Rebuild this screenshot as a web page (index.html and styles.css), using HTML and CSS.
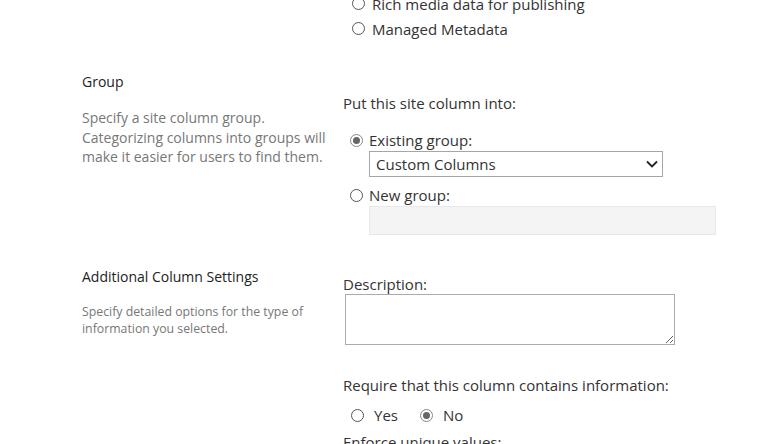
FILE: index.html
```html
<!DOCTYPE html>
<html>
<head>
<meta charset="utf-8">
<link rel="stylesheet" href="styles.css">
</head>
<body>
<div class="page">
  <div class="prev">
    <label class="opt"><span class="radio"></span><span>Rich media data for publishing</span></label>
    <label class="opt"><span class="radio"></span><span>Managed Metadata</span></label>
  </div>

  <section class="row group-row">
    <div class="left">
      <h3 class="title">Group</h3>
      <p class="desc">Specify a site column group. Categorizing columns into groups will make it easier for users to find them.</p>
    </div>
    <div class="right">
      <div class="label put">Put this site column into:</div>
      <div class="gopt"><span class="radio checked"></span><span>Existing group:</span></div>
      <div class="select"><span>Custom Columns</span>
        <svg class="chev" width="12" height="8" viewBox="0 0 12 8"><path d="M1 1.5 L6 6.5 L11 1.5" fill="none" stroke="#222" stroke-width="1.8"/></svg>
      </div>
      <div class="gopt newg"><span class="radio"></span><span>New group:</span></div>
      <div class="newinput"></div>
    </div>
  </section>

  <section class="row add-row">
    <div class="left">
      <h3 class="title">Additional Column Settings</h3>
      <p class="desc small">Specify detailed options for the type of information you selected.</p>
    </div>
    <div class="right">
      <div class="label">Description:</div>
      <textarea class="ta"></textarea>
      <div class="label req">Require that this column contains information:</div>
      <div class="yn">
        <span class="radio"></span><span class="ynl">Yes</span>
        <span class="radio checked"></span><span class="ynl">No</span>
      </div>
      <div class="label enf">Enforce unique values:</div>
    </div>
  </section>
</div>
</body>
</html>
```
FILE: styles.css
```css
* { box-sizing: border-box; }
html, body { margin: 0; padding: 0; background: #fff; overflow: hidden; }
body { font-family: "Open Sans", "Noto Sans", sans-serif; color: #333; width: 779px; height: 444px; }
.page { padding-left: 82px; margin-top: -9px; }

.radio {
  display: inline-block; width: 13px; height: 13px; border-radius: 50%;
  border: 1px solid #555; background: #fff; flex: none; position: relative;
}
.radio.checked { border-color: #888; }
.radio.checked::after {
  content: ""; position: absolute; left: 2px; top: 2px; width: 7px; height: 7px;
  border-radius: 50%; background: #666;
}

.prev { margin-left: 270px; }
.opt { display: flex; align-items: center; gap: 7px; font-size: 15px; height: 25px; }

.row { display: flex; }
.left { width: 261px; flex: none; padding-right: 8px; }
.left .desc { max-width: 248px; }
.right { flex: 1; }

.title { font-weight: normal; font-size: 14px; margin: 0; line-height: 19px; color: #222; }
.desc { margin: 0; font-size: 14px; line-height: 19.5px; color: #777; }
.desc.small { font-size: 12.3px; line-height: 17px; }

.group-row { margin-top: 31px; }
.group-row .desc { margin-top: 17px; }
.label { font-size: 15px; line-height: 20px; }
.put { margin-top: 21px; }
.gopt { display: flex; align-items: center; gap: 6px; font-size: 15px; line-height: 20px; margin-left: 7px; margin-top: 17px; }
.gopt.newg { margin-top: 8px; }
.select {
  margin-left: 26px; margin-top: 1px; width: 294px; height: 26px; border: 1px solid #a6a6a6;
  display: flex; align-items: center; justify-content: space-between; padding: 0 4px 0 6px;
  font-size: 15px;
}
.newinput { margin-left: 26px; margin-top: 1px; width: 347px; height: 29px; background: #f4f4f4; border: 1px solid #e8e8e8; }

.add-row { margin-top: 32px; }
.add-row .desc { margin-top: 17px; }
.add-row .right { padding-top: 7px; }
.ta {
  display: block; margin: 0 0 0 2px; width: 330px; height: 51px; border: 1px solid #ababab;
  resize: both; font: inherit;
}
.req { margin-top: 30px; }
.yn { display: flex; align-items: center; margin-left: 8px; margin-top: 10px; font-size: 15px; line-height: 20px; }
.ynl { margin-left: 10px; margin-right: 22px; }
.enf { margin-top: 7px; }
```
